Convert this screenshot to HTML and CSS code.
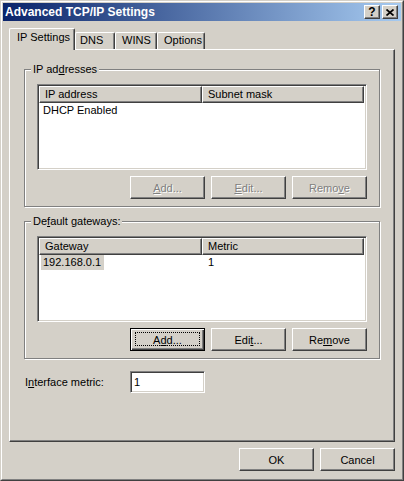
FILE: index.html
```html
<!DOCTYPE html>
<html lang="en">
<head>
  <meta charset="UTF-8" />
  <title>Advanced TCP/IP Settings</title>
  <link rel="stylesheet" href="styles.css">
</head>
<body>
  <div class="window">
    <div class="frame">
      <div class="titlebar">
        <span class="title">Advanced TCP/IP Settings</span>
        <div class="caption-buttons">
          <span class="cap-btn help">?</span>
          <span class="cap-btn close">
            <svg width="8" height="7" viewBox="0 0 8 7">
              <path d="M0.5 0.5 L7.5 6.5 M7.5 0.5 L0.5 6.5" stroke="#000" stroke-width="1.7" fill="none"/>
            </svg>
          </span>
        </div>
      </div>

      <div class="client">
        <div class="tabs">
          <div class="tab active t-ip">IP Settings</div>
          <div class="tab t-dns">DNS</div>
          <div class="tab t-wins">WINS</div>
          <div class="tab t-opt">Options</div>
        </div>

        <div class="panel">
          <div class="group">
            <div class="group-label">IP ad<u>d</u>resses</div>
            <div class="list">
              <div class="list-head">
                <div class="col c1">IP address</div>
                <div class="col c2">Subnet mask</div>
              </div>
              <div class="row">
                <span class="cell c1">DHCP Enabled</span>
              </div>
            </div>
            <div class="btn-row">
              <button class="btn" disabled><u>A</u>dd...</button>
              <button class="btn" disabled><u>E</u>dit...</button>
              <button class="btn" disabled>Remo<u>v</u>e</button>
            </div>
          </div>

          <div class="group second">
            <div class="group-label">De<u>f</u>ault gateways:</div>
            <div class="list">
              <div class="list-head">
                <div class="col c1">Gateway</div>
                <div class="col c2">Metric</div>
              </div>
              <div class="row">
                <span class="cell c1"><span class="sel">192.168.0.1</span></span>
                <span class="cell c2">1</span>
              </div>
            </div>
            <div class="btn-row">
              <button class="btn default">A<u>d</u>d...</button>
              <button class="btn">Edi<u>t</u>...</button>
              <button class="btn">Re<u>m</u>ove</button>
            </div>
          </div>

          <div class="metric-row">
            <label class="metric-label" for="metric">I<u>n</u>terface metric:</label>
            <input class="field" id="metric" type="text" value="1">
          </div>
        </div>

        <div class="dialog-buttons">
          <button class="btn">OK</button>
          <button class="btn">Cancel</button>
        </div>
      </div>
    </div>
  </div>
</body>
</html>
```

FILE: styles.css
```css
* {
  box-sizing: border-box;
}
body {
  margin: 0;
  font-family: "Liberation Sans", Arial, sans-serif;
  font-size: 11px;
  color: #000;
  background: #d4d0c8;
}
u {
  text-decoration: underline;
  text-underline-offset: 1px;
}

/* window frame */
.window {
  width: 404px;
  height: 481px;
  background: #d4d0c8;
  border: 1px solid;
  border-color: #d4d0c8 #404040 #404040 #d4d0c8;
}
.frame {
  height: 100%;
  border: 1px solid;
  border-color: #fff #808080 #808080 #fff;
  padding: 1px;
  display: flex;
  flex-direction: column;
}
.titlebar {
  height: 18px;
  flex: 0 0 18px;
  background: linear-gradient(to right, #0a246a, #a6caf0);
  display: flex;
  align-items: center;
  padding: 0 3px 0 2px;
}
.title {
  flex: 1;
  color: #fff;
  font-weight: bold;
  font-size: 12px;
}
.caption-buttons {
  display: flex;
  gap: 2px;
}
.cap-btn {
  width: 16px;
  height: 14px;
  background: #d4d0c8;
  border: 1px solid;
  border-color: #fff #404040 #404040 #fff;
  box-shadow: inset -1px -1px #808080;
  display: flex;
  align-items: center;
  justify-content: center;
}
.cap-btn.help {
  font-weight: bold;
  font-size: 12px;
  line-height: 12px;
  padding-bottom: 1px;
}

/* client area */
.client {
  flex: 1;
  padding: 7px 6px 7px;
  display: flex;
  flex-direction: column;
}
.tabs {
  display: flex;
  align-items: flex-end;
  height: 21px;
  flex: 0 0 21px;
}
.tab {
  height: 17px;
  line-height: 13px;
  padding-top: 1px;
  border: 1px solid;
  border-bottom: none;
  border-color: #fff #404040 #fff #fff;
  box-shadow: inset -1px 0 #808080;
  border-radius: 2px 2px 0 0;
}
.tab.active {
  height: 22px;
  margin-bottom: -1px;
  padding-top: 2px;
  background: #d4d0c8;
  z-index: 1;
}
.t-ip { width: 66px; padding-left: 7px; }
.t-dns { width: 40px; padding-left: 4px; }
.t-wins { width: 42px; padding-left: 6px; }
.t-opt { width: 48px; padding-left: 6px; }

.panel {
  flex: 0 0 393px;
  border: 1px solid;
  border-color: #fff #404040 #404040 #fff;
  box-shadow: inset -1px -1px #808080;
  padding: 19px 14px 0 14px;
}

/* group boxes */
.group {
  height: 138px;
  border: 1px solid #808080;
  box-shadow: inset 1px 1px #fff, 1px 1px #fff;
  padding: 14px 12px 7px;
}
.group.second {
  margin-top: 14px;
}
.group-label {
  width: fit-content;
  height: 13px;
  line-height: 13px;
  margin: -21px 0 8px -6px;
  padding: 0 2px;
  background: #d4d0c8;
}

/* list views */
.list {
  height: 86px;
  background: #fff;
  border: 1px solid;
  border-color: #808080 #fff #fff #808080;
  box-shadow: inset 1px 1px #404040, inset -1px -1px #d4d0c8;
  padding: 1px;
}
.list-head {
  display: flex;
  height: 17px;
}
.col {
  height: 17px;
  line-height: 13px;
  padding: 1px 5px 0;
  background: #d4d0c8;
  border: 1px solid;
  border-color: #fff #404040 #404040 #fff;
  box-shadow: inset -1px -1px #808080;
}
.col.c1 {
  width: 163px;
}
.col.c2 {
  flex: 1;
  margin-right: 1px;
}
.row {
  display: flex;
  height: 14px;
  line-height: 14px;
}
.cell.c1 {
  width: 163px;
  padding-left: 4px;
}
.cell.c2 {
  padding-left: 6px;
}
.sel {
  display: inline-block;
  margin-left: -2px;
  padding: 0 3px 0 2px;
  height: 15px;
  background: #d4d0c8;
}

/* buttons */
.btn-row,
.dialog-buttons {
  display: flex;
  justify-content: flex-end;
  gap: 6px;
  margin-top: 6px;
}
.btn {
  width: 75px;
  height: 23px;
  padding: 0;
  font: inherit;
  color: #000;
  background: #d4d0c8;
  border: 1px solid;
  border-color: #fff #404040 #404040 #fff;
  box-shadow: inset -1px -1px #808080;
  position: relative;
}
.btn:disabled {
  color: #808080;
  text-shadow: 1px 1px #fff;
}
.btn.default {
  border-color: #000;
  box-shadow: inset 1px 1px #fff, inset -1px -1px #404040, inset -2px -2px #808080;
}
.btn.default::after {
  content: "";
  position: absolute;
  top: 3px;
  left: 4px;
  right: 4px;
  bottom: 4px;
  border: 1px dotted #000;
}

/* interface metric */
.metric-row {
  display: flex;
  align-items: center;
  margin-top: 12px;
}
.metric-label {
  width: 106px;
  padding-left: 1px;
}
.field {
  width: 75px;
  height: 22px;
  font: inherit;
  padding: 0 3px;
  background: #fff;
  border: 1px solid;
  border-color: #808080 #fff #fff #808080;
  box-shadow: inset 1px 1px #404040, inset -1px -1px #d4d0c8;
  outline: none;
}
```
